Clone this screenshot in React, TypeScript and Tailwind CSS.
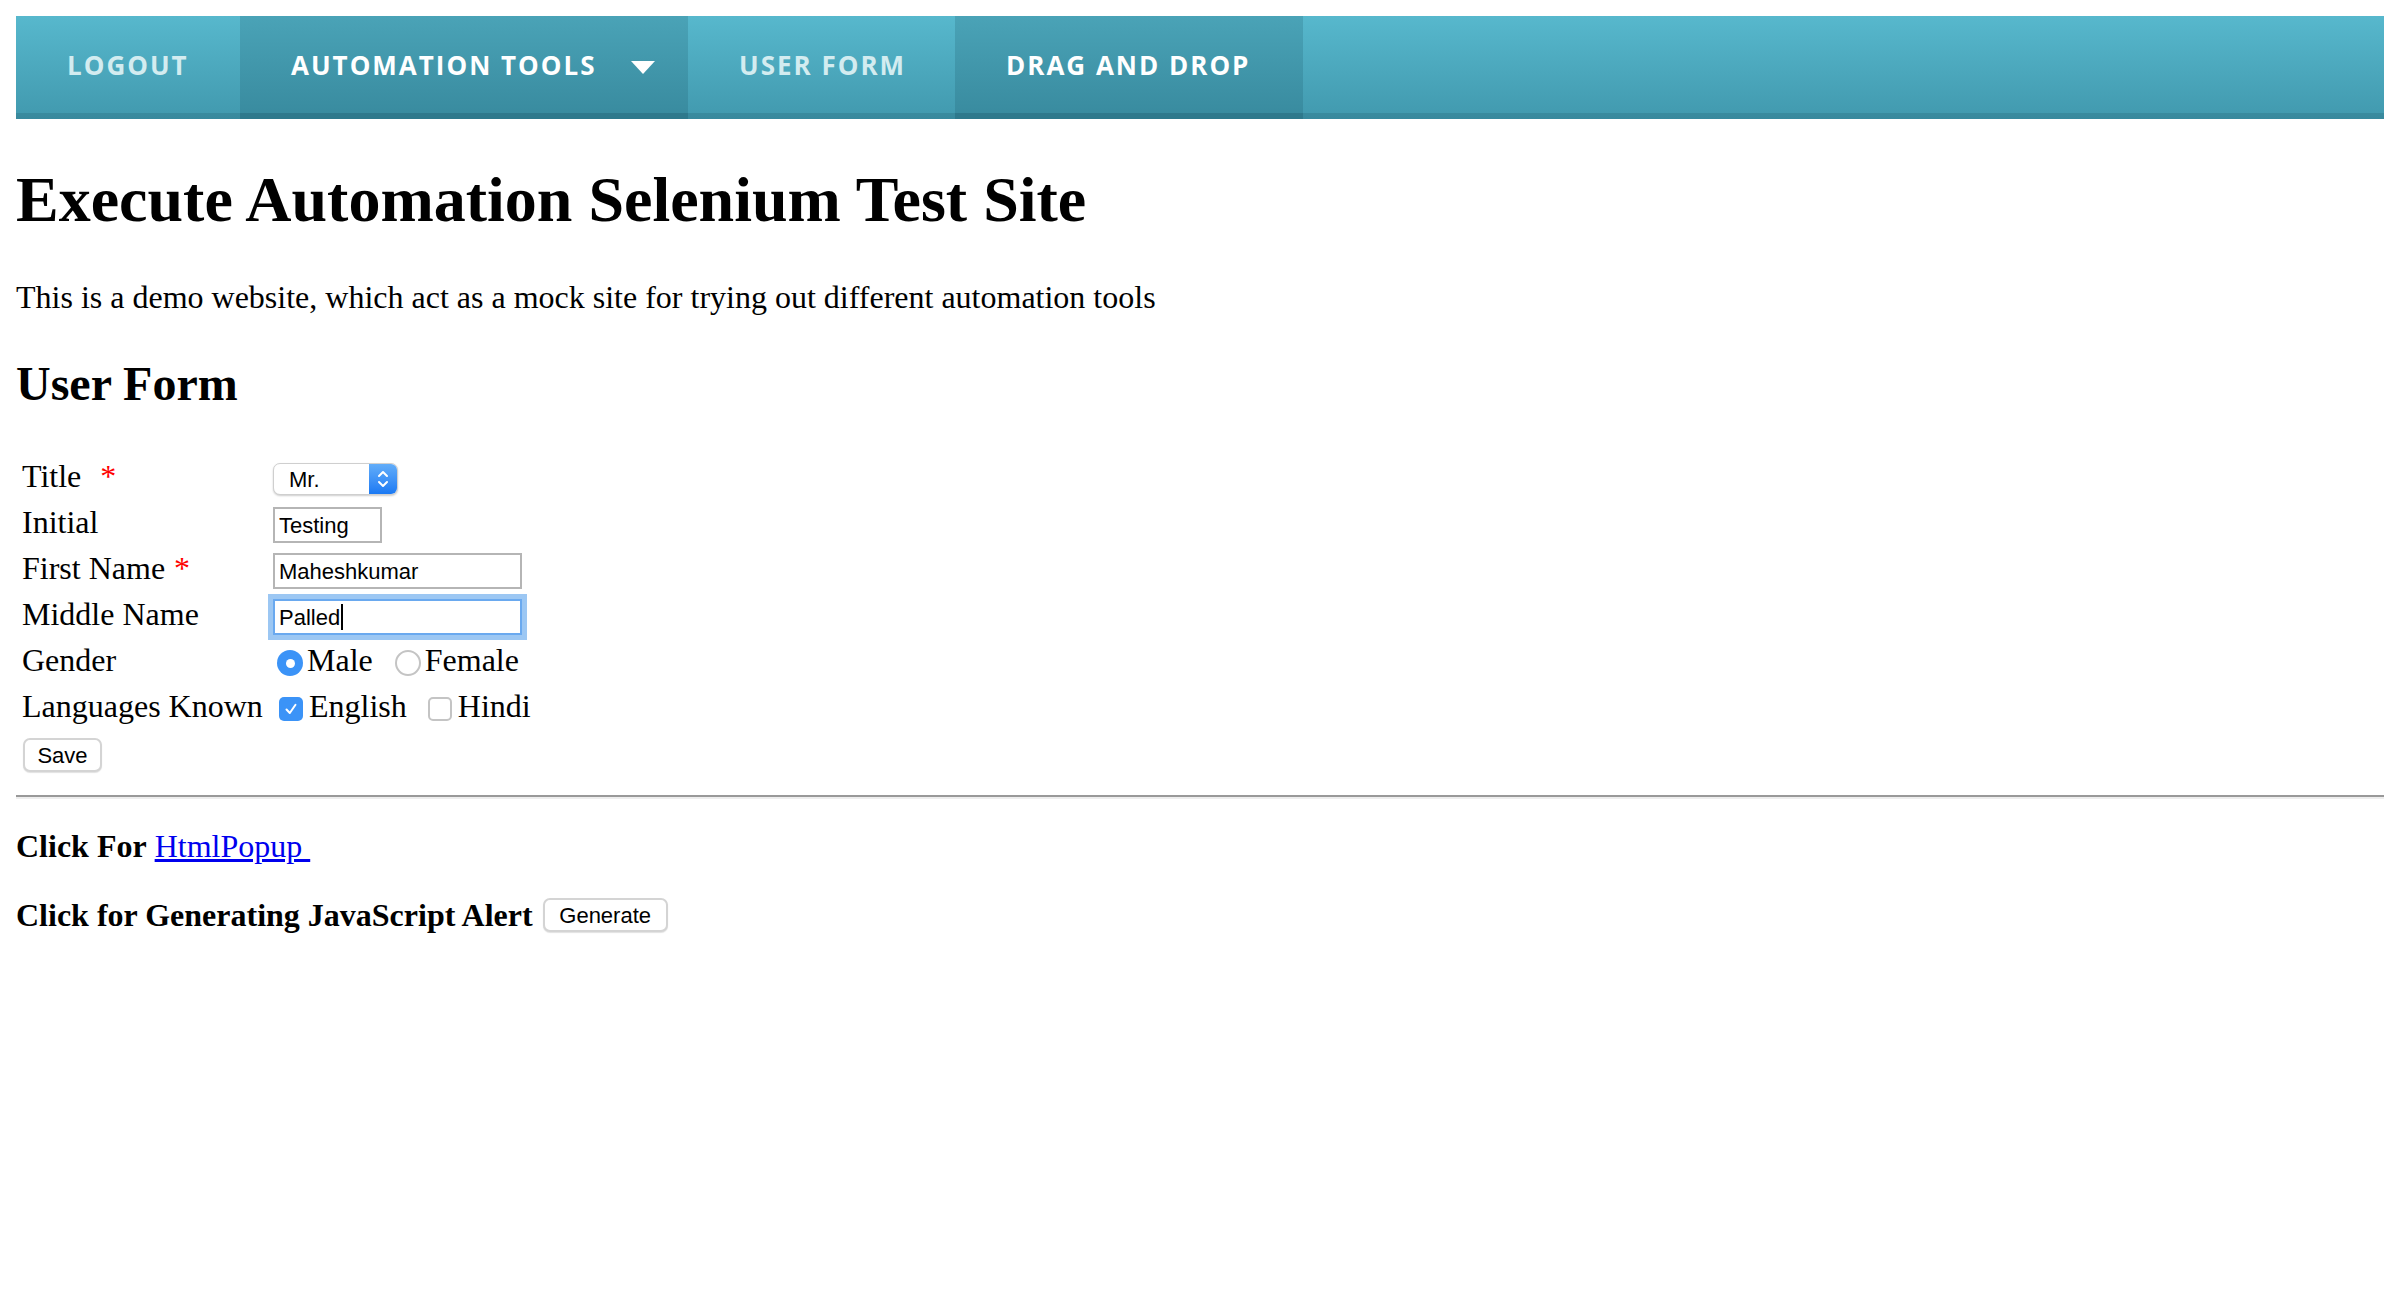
import React from 'react'

const navItems = [
  { label: 'LOGOUT', dark: false, dropdown: false, w: 'w-[224px]' },
  { label: 'AUTOMATION TOOLS', dark: true, dropdown: true, w: 'w-[448px]' },
  { label: 'USER FORM', dark: false, dropdown: false, w: 'w-[267px]' },
  { label: 'DRAG AND DROP', dark: true, dropdown: false, w: 'w-[348px]' },
]

const serif = "font-['Liberation_Serif','Times_New_Roman',serif]"
const sans = "font-['Liberation_Sans',Arial,sans-serif]"

function Row({ label, star, children }: { label: string; star?: 'wide' | 'tight'; children: React.ReactNode }) {
  return (
    <div className="flex h-[46px] items-center">
      <div className="w-[251px] shrink-0 pb-[6px] leading-[40px]">
        {label}
        {star === 'wide' && <span className="ml-[19px] text-[#ff0000]">*</span>}
        {star === 'tight' && <span className="ml-[9px] text-[#ff0000]">*</span>}
      </div>
      {children}
    </div>
  )
}

function TextInput({ value, w, focused }: { value: string; w: string; focused?: boolean }) {
  return (
    <div className={`${w} flex h-[36px] items-center border-2 ${focused ? 'border-[#6aa9ef] ring-[5px] ring-[#9cc7f3]' : 'border-[#b5b5b5]'} bg-white px-[4px] text-[22px] text-black ${sans}`}>
      {value}
      {focused && <span className="ml-[1px] h-[26px] w-[2px] bg-black" />}
    </div>
  )
}

function Radio({ checked }: { checked?: boolean }) {
  return checked ? (
    <span className="mx-[4px] flex h-[26px] w-[26px] items-center justify-center rounded-full bg-[#3b93f7]">
      <span className="h-[9px] w-[9px] rounded-full bg-white" />
    </span>
  ) : (
    <span className="mx-[4px] h-[26px] w-[26px] rounded-full border-2 border-[#c4c4c4] bg-white" />
  )
}

function Check({ checked }: { checked?: boolean }) {
  return checked ? (
    <span className="mx-[6px] flex h-[24px] w-[24px] items-center justify-center rounded-[5px] bg-[#3b93f7]">
      <svg width="16" height="16" viewBox="0 0 16 16" fill="none">
        <path d="M3.5 8.5 L6.8 12 L12.5 3.8" stroke="white" strokeWidth="2" strokeLinecap="round" strokeLinejoin="round" />
      </svg>
    </span>
  ) : (
    <span className="mx-[6px] h-[24px] w-[24px] rounded-[5px] border-2 border-[#c4c4c4] bg-white" />
  )
}

function Button({ children, w }: { children: React.ReactNode; w: string }) {
  return (
    <button className={`${w} flex h-[34px] items-center justify-center rounded-[7px] border-2 border-[#d4d4d4] bg-white text-[22px] text-black shadow-[0_1px_1px_rgba(0,0,0,0.12)] ${sans}`}>
      {children}
    </button>
  )
}

export default function App() {
  return (
    <div className={`min-h-[1304px] bg-white p-[16px] text-black ${serif}`}>
      <nav className="flex h-[103px] w-full bg-gradient-to-b from-[#57b8cd] to-[#4199ae] shadow-[inset_0_-6px_0_rgba(40,110,125,0.35)]">
        {navItems.map((item) => (
          <div
            key={item.label}
            className={`${item.w} flex h-full items-center pl-[51px] font-['Open_Sans',sans-serif] text-[26px] font-bold tracking-[2px] ${
              item.dark
                ? 'bg-gradient-to-b from-[#4aa3b7] to-[#388a9e] text-white shadow-[inset_0_-6px_0_rgba(30,90,105,0.35)]'
                : 'text-[#d3ecf0]'
            }`}
          >
            <span className="pb-[4px]">{item.label}</span>
            {item.dropdown && (
              <svg className="ml-[34px]" width="24" height="13" viewBox="0 0 24 13">
                <polygon points="0,0 24,0 12,13" fill="white" />
              </svg>
            )}
          </div>
        ))}
      </nav>

      <h1 className="mt-[45px] text-[64px] font-bold leading-[71px]">Execute Automation Selenium Test Site</h1>
      <p className="mt-[44px] text-[32px] leading-[36px]">This is a demo website, which act as a mock site for trying out different automation tools</p>
      <h2 className="mt-[42px] text-[48px] font-bold leading-[53px]">User Form</h2>

      <div className="mt-[46px] pl-[6px] text-[32px]">
        <Row label="Title" star="wide">
          <div className={`flex h-[32px] w-[125px] overflow-hidden rounded-[7px] border border-[#cfcfcf] bg-white shadow-[0_1px_2px_rgba(0,0,0,0.2)] ${sans}`}>
            <span className="flex flex-1 items-center pl-[15px] text-[22px]">Mr.</span>
            <span className="flex w-[28px] items-center justify-center bg-gradient-to-b from-[#62adf9] to-[#1a79f3]">
              <svg width="14" height="22" viewBox="0 0 14 22" fill="none">
                <path d="M3 8 L7 4 L11 8 M3 14 L7 18 L11 14" stroke="white" strokeWidth="2" strokeLinecap="round" strokeLinejoin="round" />
              </svg>
            </span>
          </div>
        </Row>
        <Row label="Initial">
          <TextInput value="Testing" w="w-[109px]" />
        </Row>
        <Row label="First Name" star="tight">
          <TextInput value="Maheshkumar" w="w-[249px]" />
        </Row>
        <Row label="Middle Name">
          <TextInput value="Palled" w="w-[249px]" focused />
        </Row>
        <Row label="Gender">
          <div className="flex items-center">
            <Radio checked />
            <span className="pb-[6px]">Male</span>
            <span className="w-[18px]" />
            <Radio />
            <span className="pb-[6px]">Female</span>
          </div>
        </Row>
        <Row label="Languages Known">
          <div className="flex items-center">
            <Check checked />
            <span className="pb-[6px]">English</span>
            <span className="w-[15px]" />
            <Check />
            <span className="pb-[6px]">Hindi</span>
          </div>
        </Row>
        <div className="flex h-[46px] items-center pl-[1px]">
          <Button w="w-[79px]">Save</Button>
        </div>
      </div>

      <hr className="mt-[17px] border-t-2 border-b-2 border-t-[#999999] border-b-[#eeeeee]" />

      <div className="mt-[27px] flex h-[40px] items-center text-[32px] font-bold">
        Click For&nbsp;<a href="#" className="font-normal text-[#0000ee] underline">HtmlPopup&nbsp;</a>
      </div>
      <div className="mt-[29px] flex h-[40px] items-center text-[32px] font-bold">
        <span>Click for Generating JavaScript Alert</span>
        <span className="w-[10px]" />
        <Button w="w-[125px]">
          <span className="font-normal">Generate</span>
        </Button>
      </div>
    </div>
  )
}
